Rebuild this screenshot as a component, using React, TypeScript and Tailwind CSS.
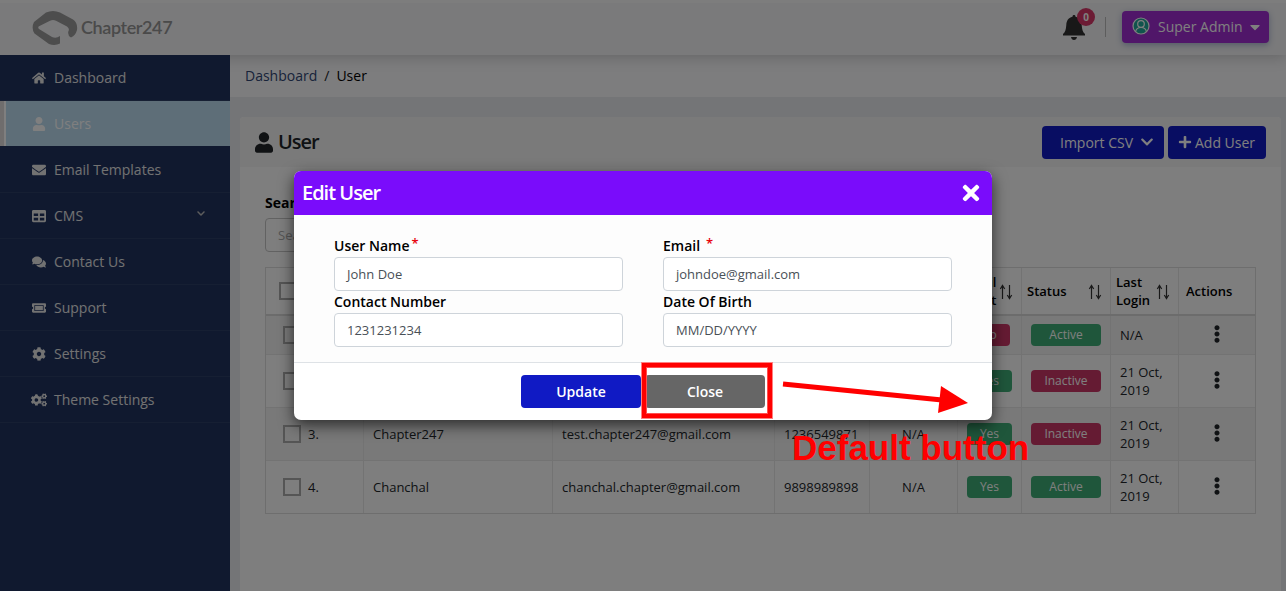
import React from "react";
import { FaHome, FaUser, FaEnvelope, FaTable, FaComments, FaTicketAlt, FaCog, FaCogs, FaChevronDown, FaPlus, FaTimes, FaEllipsisV, FaCaretDown } from "react-icons/fa";

const nav = [
  { label: "Dashboard", Icon: FaHome },
  { label: "Users", Icon: FaUser, active: true },
  { label: "Email Templates", Icon: FaEnvelope },
  { label: "CMS", Icon: FaTable, more: true },
  { label: "Contact Us", Icon: FaComments },
  { label: "Support", Icon: FaTicketAlt },
  { label: "Settings", Icon: FaCog },
  { label: "Theme Settings", Icon: FaCogs, wide: true },
];

const rows = [
  { id: "1.", name: "John Doe", email: "johndoe@gmail.com", phone: "1231231234", dob: "N/A", verified: false, active: true, login: ["N/A"] },
  { id: "2.", name: "Test", email: "test@gmail.com", phone: "1234567890", dob: "N/A", verified: true, active: false, login: ["21 Oct,", "2019"] },
  { id: "3.", name: "Chapter247", email: "test.chapter247@gmail.com", phone: "1236549871", dob: "N/A", verified: true, active: false, login: ["21 Oct,", "2019"] },
  { id: "4.", name: "Chanchal", email: "chanchal.chapter@gmail.com", phone: "9898989898", dob: "N/A", verified: true, active: true, login: ["21 Oct,", "2019"] },
];

const rowHeights = ["h-[39px]", "h-[53px]", "h-[53px]", "h-[52px]"];
const grid = "grid grid-cols-[98px_189px_222px_95px_88px_64px_89px_68px_76px]";
const cell = "flex items-center border-r border-[#e6e6e6]";
const textCell = "flex items-center border-r border-[#e6e6e6] pt-px";

function Logo() {
  return (
    <div className="mt-[2px] flex items-center">
      <svg width="46" height="36" viewBox="0 0 46 36" className="shrink-0">
        <path d="M14 2.500Q21-.500 28 2.500L41 9.500Q46 13 45 20 43.500 25.500 39 27.500 35.500 25.500 36.300 21.500 38 18.500 35 16.500L24 10.800Q21 9.300 18 10.800L7 16.300Q5.500 17.500 7 19L20 27Q24 29 28 26V33.500Q23 36 17 34L2.500 23.500Q-1 18 2 12z" fill="#9a9a9a" />
      </svg>
      <span className="-mt-[2px] ml-[3px] font-['Lato',sans-serif] text-[18px] font-semibold leading-6 tracking-[-0.4px] text-[#949494]">Chapter247</span>
    </div>
  );
}

function Sort({ className = "mt-px" }: { className?: string }) {
  return (
    <svg width="14" height="16" viewBox="0 0 14 16" fill="none" stroke="#333" strokeWidth="1.200" className={`shrink-0 ${className}`}>
      <path d="M3.500 15V2M1.300 5l2.200-3.500L5.700 5M10.500 1v13M8.300 11l2.200 3.500 2.200-3.500" />
    </svg>
  );
}

function Badge({ ok, text, className }: { ok: boolean; text: string; className: string }) {
  return (
    <span className={`flex h-[22px] items-center justify-center rounded pb-px text-[12px] text-white ${ok ? "bg-[#3eac76]" : "bg-[#cb3767]"} ${className}`}>
      {text}
    </span>
  );
}

function Field({ label, star, value }: { label: string; star?: string; value: string }) {
  return (
    <div>
      <div className="flex h-[22px] items-center pb-[2px] text-[14px] font-semibold text-black">
        {label}
        {star && <span className={`-mt-0.5 text-[13px] text-red-600 ${star}`}>*</span>}
      </div>
      <div className="flex h-[34px] items-center rounded border border-[#ced4da] bg-white px-3 pt-px text-[13px] text-[#495057]">{value}</div>
    </div>
  );
}

export default function App() {
  return (
    <div className="relative h-[591px] w-[1286px] overflow-hidden bg-[#e9eaef] font-['Open_Sans',sans-serif] text-[14px] text-[#212529]">
      <header className="relative flex h-[55px] items-center justify-between border-t-[3px] border-[#fbfbfb] bg-[#f4f4f6] pb-1 pl-8 pr-[17px] shadow-[0_2px_14px_rgba(0,0,0,0.2)]">
        <Logo />
        <div className="flex items-center">
          <div className="relative mr-[19px] h-7 w-6">
            <svg width="24" height="26" viewBox="0 0 24 26" fill="#303030" className="mt-0.5">
              <path d="M12 0c1 0 1.500.7 1.500 1.700 4.500 1 6 4.300 6.200 8.300.3 4.500 1 7 3.300 9v1.500H1V19c2.300-2 3-4.500 3.300-9 .2-4 1.700-7.300 6.200-8.300C10.500.7 11 0 12 0zM9 22h6c-.3 2-1.500 3-3 3s-2.700-1-3-3z" />
            </svg>
            <span className="absolute -top-[5px] left-[15px] flex h-[18px] w-[18px] items-center justify-center rounded-full bg-[#d83768] text-[10px] font-bold text-white">0</span>
          </div>
          <div className="mr-4 h-5 w-px bg-[#bbb]" />
          <button className="flex h-8 w-[147px] items-center rounded bg-[#a02cd2] pb-px pl-[10px] text-white shadow-[0_2px_6px_#a7b3d0]">
            <svg width="18" height="18" viewBox="0 0 18 18" fill="none" stroke="#fff" strokeWidth="1.200" className="-mt-px">
              <circle cx="9" cy="9" r="8" fill="#20a89b" />
              <circle cx="9" cy="7" r="3.300" />
              <path d="M3.500 15c.5-3 2.500-4.500 5.500-4.500s5 1.500 5.500 4.500" />
            </svg>
            <span className="ml-2">Super Admin</span>
            <FaCaretDown className="ml-[7px] h-4 w-[10px]" />
          </button>
        </div>
      </header>

      <div className="flex h-[536px]">
        <nav className="relative w-[230px] shrink-0 bg-[#20325f] text-[#e4e4e4]">
          {nav.map(({ label, Icon, active, more, wide }) => (
            <div key={label} className={`flex h-[46px] items-center border-b pr-6 ${active ? "border-b-[#20325f] bg-[#bddcf0] text-white" : "border-[#2c3e66] pl-8"}`}>
              {active && <span className="mr-[26px] h-full w-1.5 border-r-2 border-white bg-[#dedada]" />}
              <Icon className={`shrink-0 ${wide ? "-mx-px h-4 w-4" : "h-[14px] w-[14px]"}`} />
              <span className="ml-2">{label}</span>
              {more && <FaChevronDown className="mb-1 ml-auto h-[9px] w-[10px] text-[#bbb]" />}
            </div>
          ))}
        </nav>

        <main className="flex-1">
          <div className="flex h-[42px] items-center bg-[#fafafc] pb-px pl-[15px]">
            <span className="text-[#304674]">Dashboard</span>
            <span className="ml-[7px] mr-[7px]">/</span>
            <span className="text-black">User</span>
          </div>
          <section className="ml-[10px] mr-[5px] mt-5 h-[480px] rounded bg-[#fdfdfd]">
            <div className="flex h-[50px] items-center rounded-t bg-[#f5f5f5] pl-[15px] pr-[15px]">
              <FaUser className="h-[21px] w-[18px]" />
              <h1 className="ml-[5px] text-[20px] font-semibold tracking-[-1px]">User</h1>
              <div className="ml-auto flex gap-1 text-white">
                <button className="flex h-[33px] w-[122px] items-center rounded bg-[#101ac4] pl-[18px]">Import CSV <FaChevronDown className="ml-[7px] h-[14px] w-[14px]" /></button>
                <button className="flex h-[33px] w-[98px] items-center rounded bg-[#101ac4] pl-[10px]"><FaPlus className="mr-[3px] h-[14px] w-[14px]" />Add User</button>
              </div>
            </div>
            <div className="px-[25px] pt-[25px]">
              <div className="h-[26px] font-bold text-black">Search</div>
              <div className="flex h-[34px] w-[250px] items-center rounded border border-[#c4c4c4] pl-3 pt-px text-[13px] text-[#aaa]">Search</div>
              <div className="mt-[15px] w-[991px] border border-[#dcdcdc] text-[13px]">
                <div className={`${grid} h-[48px] border-b-2 border-[#d9d9d9] font-semibold text-black`}>
                  <div className={`${cell} pl-[13px]`}><span className="h-[18px] w-[18px] border-2 border-[#aaa]" /></div>
                  <div className={`${cell} pl-2`}>Name</div>
                  <div className={`${cell} pl-2`}>Email</div>
                  <div className={`${cell} pl-2`}>Contact</div>
                  <div className={`${cell} pl-2`}>DOB</div>
                  <div className={`${cell} justify-between pl-1 pr-2 leading-[18px]`}><span className="text-right">Email<br />List</span><Sort /></div>
                  <div className={`${cell} justify-between pl-[5px] pr-2 pt-[2px]`}>Status <Sort className="-mt-px" /></div>
                  <div className={`${cell} justify-between pl-[5px] pr-2 leading-[18px]`}><span>Last<br />Login</span><Sort /></div>
                  <div className="flex items-center pl-[7px] pt-[2px]">Actions</div>
                </div>
                {rows.map((r, i) => (
                  <div key={r.id} className={`${grid} border-[#e6e6e6] ${rowHeights[i]} ${i < 3 ? "border-b" : ""} ${i % 2 === 0 ? "bg-[#f3f3f3]" : ""}`}>
                    <div className={`${cell} pl-[17px]`}><span className="mr-[7px] h-[18px] w-[18px] border-2 border-[#aaa]" /><span className="pt-px">{r.id}</span></div>
                    <div className={`${textCell} pl-[9px]`}>{r.name}</div>
                    <div className={`${textCell} pl-[9px]`}>{r.email}</div>
                    <div className={`${textCell} pl-[9px]`}>{r.phone}</div>
                    <div className={`${textCell} justify-center`}>{r.dob}</div>
                    <div className={`${cell} pl-[9px]`}><Badge ok={r.verified} text={r.verified ? "Yes" : "No"} className={r.verified ? "w-[45px]" : "w-[43px]"} /></div>
                    <div className={`${cell} pl-[9px]`}><Badge ok={r.active} text={r.active ? "Active" : "Inactive"} className="w-[70px]" /></div>
                    <div className={`${cell} pl-[9px] leading-[18px]`}><span>{r.login.map((l) => <span key={l} className="block">{l}</span>)}</span></div>
                    <div className="flex items-center justify-center pb-[2px]"><FaEllipsisV className="h-[18px] w-[18px]" /></div>
                  </div>
                ))}
              </div>
            </div>
          </section>
        </main>
      </div>

      <div className="absolute inset-0 bg-black/50 pl-[294px] pt-[171px]">
        <div className="flex h-[249px] w-[698px] flex-col overflow-hidden rounded-[7px] bg-white shadow-[0_5px_15px_rgba(0,0,0,0.65)]">
          <div className="flex h-11 shrink-0 items-center justify-between bg-[#7a0cfb] pl-2 pr-[9px] text-white">
            <h2 className="text-[20px] font-semibold tracking-[-1px]">Edit User</h2>
            <FaTimes className="h-6 w-6" />
          </div>
          <div className="grid h-[148px] grid-cols-[289px_289px] content-start gap-x-10 border-b border-[#dee2e6] bg-[#fdfdfd] px-10 pt-5">
            <Field label="User Name" star="ml-0.5" value="John Doe" />
            <Field label="Email" star="ml-1.5" value="johndoe@gmail.com" />
            <Field label="Contact Number" value="1231231234" />
            <Field label="Date Of Birth" value="MM/DD/YYYY" />
          </div>
          <div className="flex flex-1 items-center gap-1 pl-[227px] font-semibold text-white">
            <button className="h-[33px] w-[120px] rounded bg-[#101ac4]">Update</button>
            <button className="h-[33px] w-[120px] rounded bg-[#666]">Close</button>
          </div>
        </div>
      </div>

      <div className="absolute left-[641px] top-[362px] h-[57px] w-[132px] border border-[#ff8080]">
        <div className="h-full w-full border-4 border-[#f00]">
          <div className="h-full w-full border border-[#ff5050]" />
        </div>
      </div>
      <svg className="absolute left-[780px] top-[375px]" width="192" height="42" viewBox="0 0 192 42">
        <path d="M3 9L162 25" stroke="#f00" strokeWidth="5" />
        <path d="M161 11l27 17-30 10z" fill="#f00" />
      </svg>
      <span className="absolute left-[792px] top-[428px] whitespace-nowrap font-['Liberation_Sans',sans-serif] text-[35px] font-bold leading-10 text-[#f00]">Default button</span>
    </div>
  );
}
